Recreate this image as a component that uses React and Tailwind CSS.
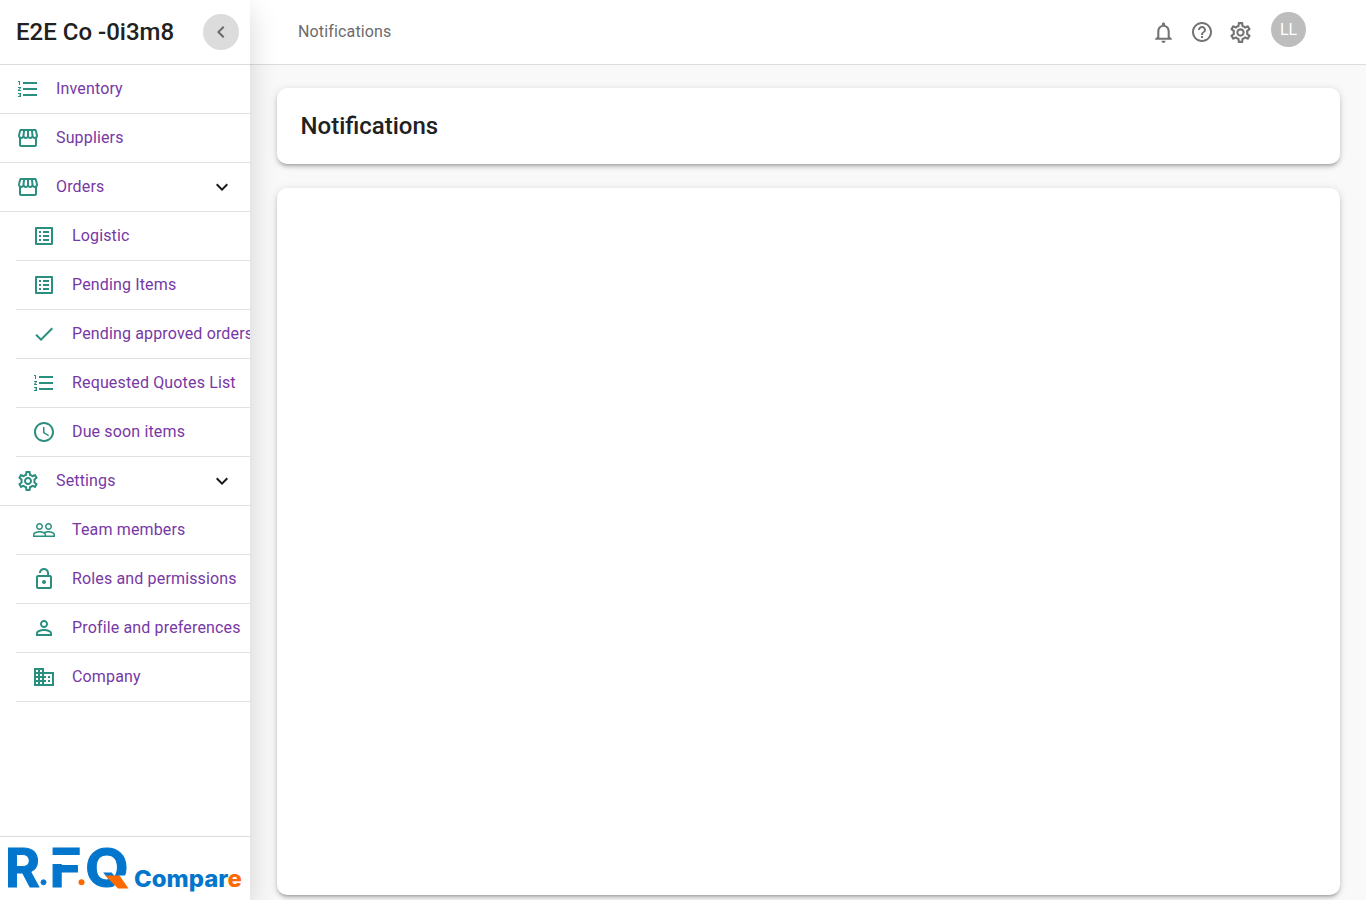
import React from 'react';
import {
  MdAccessTime,
  MdCheck,
  MdChevronLeft,
  MdExpandMore,
  MdFormatListNumbered,
  MdHelpOutline,
  MdLockOpen,
  MdNotificationsNone,
  MdOutlineBusiness,
  MdOutlineListAlt,
  MdOutlineSettings,
  MdOutlineStorefront,
  MdPeopleOutline,
  MdPersonOutline,
} from 'react-icons/md';

const menu = [
  { label: 'Inventory', icon: MdFormatListNumbered },
  { label: 'Suppliers', icon: MdOutlineStorefront },
  {
    label: 'Orders',
    icon: MdOutlineStorefront,
    children: [
      { label: 'Logistic', icon: MdOutlineListAlt },
      { label: 'Pending Items', icon: MdOutlineListAlt },
      { label: 'Pending approved orders', icon: MdCheck },
      { label: 'Requested Quotes List', icon: MdFormatListNumbered },
      { label: 'Due soon items', icon: MdAccessTime },
    ],
  },
  {
    label: 'Settings',
    icon: MdOutlineSettings,
    children: [
      { label: 'Team members', icon: MdPeopleOutline },
      { label: 'Roles and permissions', icon: MdLockOpen },
      { label: 'Profile and preferences', icon: MdPersonOutline },
      { label: 'Company', icon: MdOutlineBusiness },
    ],
  },
];

const MenuItem = ({ item }) => {
  const Icon = item.icon;
  return (
    <a className="flex h-[49px] items-center border-b border-[#e0e0e0] pl-4 whitespace-nowrap">
      <Icon size={24} className="shrink-0 text-[#2a8f7f]" />
      <span className="ml-4 text-base leading-6 tracking-[0.15px] text-[#7738a5]">{item.label}</span>
      {item.children && <MdExpandMore size={24} className="mr-4 ml-auto text-black/90" />}
    </a>
  );
};

const Logo = () => (
  <svg width="250" height="63" viewBox="0 837 250 63" className="overflow-visible" fontFamily="Inter, sans-serif" fontWeight="700">
    <g fill="#0275cc" stroke="#0275cc" strokeWidth="1" fontSize="53.5">
      <text x="5" y="886.5" textLength="35" lengthAdjust="spacingAndGlyphs">R</text>
      <text x="49.5" y="886.5" textLength="32" lengthAdjust="spacingAndGlyphs">F</text>
      <text x="85" y="886.5" textLength="44" lengthAdjust="spacingAndGlyphs">Q</text>
      <circle cx="43.5" cy="882.3" r="2.5" />
    </g>
    {/* stencil cuts through the F and around the tail of the Q */}
    <rect x="51" y="855" width="30" height="9" fill="#fff" />
    <path d="M119 875.5h14v17h-20v-4z" fill="#fff" />
    <circle cx="81.5" cy="882.3" r="3" fill="#ff6a00" />
    <path d="M105 875.5h14.5l9 13H118z" fill="#ff6a00" />
    <text x="134" y="887" fontSize="23" fontWeight="800" fill="#0275cc" textLength="108" lengthAdjust="spacingAndGlyphs">
      Compar<tspan fill="#ff6a00">e</tspan>
    </text>
  </svg>
);

const Sidebar = () => (
  <aside className="relative z-10 flex w-[250px] shrink-0 flex-col overflow-hidden bg-white shadow-[0_10px_28px_0_rgba(0,0,0,0.16)]">
    <div className="flex h-[65px] shrink-0 items-center justify-between border-b border-[#dcdcdc] pr-[11px] pl-4">
      <h2 className="text-2xl font-medium text-[#212121]">E2E Co -0i3m8</h2>
      <button className="flex size-9 items-center justify-center rounded-full bg-[#dcdcdc] text-[#696969]">
        <MdChevronLeft size={24} />
      </button>
    </div>
    <nav className="flex-1">
      {menu.map((item) => (
        <div key={item.label}>
          <MenuItem item={item} />
          {item.children && (
            <div className="pl-4">
              {item.children.map((child) => (
                <MenuItem key={child.label} item={child} />
              ))}
            </div>
          )}
        </div>
      ))}
    </nav>
    <div className="h-16 shrink-0 border-t border-[#dcdcdc]">
      <Logo />
    </div>
  </aside>
);

const TopBar = () => (
  <header className="flex h-[65px] shrink-0 items-center border-b border-[#dcdcdc] bg-white pr-[60px] pl-12 text-[#6b6b6b]">
    <span className="text-base tracking-[0.15px]">Notifications</span>
    <div className="ml-auto flex items-center text-[#737373]">
      <MdNotificationsNone size={25} />
      <MdHelpOutline size={24} className="ml-[14px]" />
      <MdOutlineSettings size={25} className="mt-px ml-[14px]" />
      <div className="mb-[5px] ml-[18px] flex size-[35px] items-center justify-center rounded-full bg-[#bdbdbd] text-base text-white">
        LL
      </div>
    </div>
  </header>
);

const App = () => {
  return (
    <div className="flex h-[900px] w-full overflow-hidden bg-[#f9f9f9] font-[Roboto,sans-serif]">
      <Sidebar />
      <div className="flex min-w-0 flex-1 flex-col">
        <TopBar />
        <main className="flex flex-1 flex-col gap-6 pt-[23px] pr-[26px] pb-[5px] pl-[27px]">
          <section className="flex h-[76px] shrink-0 items-center rounded-[10px] bg-white px-[23.5px] shadow-[0_3px_3px_-2px_rgba(0,0,0,0.2),0_3px_4px_0_rgba(0,0,0,0.14),0_1px_8px_0_rgba(0,0,0,0.12)]">
            <h1 className="text-2xl font-medium text-[#212121]">Notifications</h1>
          </section>
          <section className="flex-1 rounded-[10px] bg-white shadow-[0_3px_3px_-2px_rgba(0,0,0,0.2),0_3px_4px_0_rgba(0,0,0,0.14),0_1px_8px_0_rgba(0,0,0,0.12)]" />
        </main>
      </div>
    </div>
  );
};

export default App;
